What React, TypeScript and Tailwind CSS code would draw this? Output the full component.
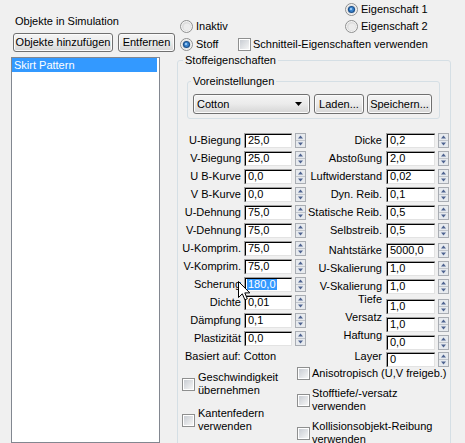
import React from 'react'

interface SpinItem {
  label: string
  value: string
  rowClass?: string
  labelClass?: string
  selected?: boolean
}

const LEFT_ROWS: SpinItem[] = [
  { label: 'U-Biegung', value: '25,0' },
  { label: 'V-Biegung', value: '25,0' },
  { label: 'U B-Kurve', value: '0,0' },
  { label: 'V B-Kurve', value: '0,0' },
  { label: 'U-Dehnung', value: '75,0' },
  { label: 'V-Dehnung', value: '75,0' },
  { label: 'U-Komprim.', value: '75,0' },
  { label: 'V-Komprim.', value: '75,0' },
  { label: 'Scherung', value: '180,0', selected: true },
  { label: 'Dichte', value: '0,01' },
  { label: 'Dämpfung', value: '0,1' },
  { label: 'Plastizität', value: '0,0' },
]

const RIGHT_ROWS: SpinItem[] = [
  { label: 'Dicke', value: '0,2' },
  { label: 'Abstoßung', value: '2,0' },
  { label: 'Luftwiderstand', value: '0,02' },
  { label: 'Dyn. Reib.', value: '0,1' },
  { label: 'Statische Reib.', value: '0,5' },
  { label: 'Selbstreib.', value: '0,5' },
  { label: 'Nahtstärke', value: '5000,0', rowClass: 'mt-[2px]' },
  { label: 'U-Skalierung', value: '1,0' },
  { label: 'V-Skalierung', value: '1,0' },
  { label: 'Tiefe', value: '1,0', rowClass: 'mt-[2px]', labelClass: 'mb-[14px]' },
  { label: 'Versatz', value: '1,0', labelClass: 'mb-[14px]' },
  { label: 'Haftung', value: '0,0', labelClass: 'mb-[14px]' },
  { label: 'Layer', value: '0', rowClass: '-mt-[1px]', labelClass: 'mb-[6px]' },
]

function Radio({ checked = false }: { checked?: boolean }) {
  return (
    <svg width="13" height="13" viewBox="0 0 13 13" className="shrink-0">
      <circle cx="6.5" cy="6.5" r="6" fill="#f3f3f3" stroke="#8e8f8f" />
      <circle cx="6.5" cy="6.5" r="4.5" fill="#dcdcdc" />
      <circle cx="7" cy="7" r="3.5" fill="#ececec" />
      {checked && (
        <>
          <circle cx="6.5" cy="6.5" r="3.6" fill="#1b4f8a" />
          <circle cx="6.5" cy="6.5" r="2.4" fill="#3c86d0" />
          <circle cx="6" cy="6" r="1.1" fill="#a9d4fa" />
        </>
      )}
    </svg>
  )
}

function Check() {
  return (
    <div className="h-[13px] w-[13px] shrink-0 border border-[#8e8f8f] bg-white p-[1px]">
      <div className="h-full w-full bg-linear-to-br from-[#c9cdd3] to-[#f6f6f6]" />
    </div>
  )
}

function Spinner() {
  return (
    <svg width="11" height="15" viewBox="0 0 11 15" className="shrink-0">
      <rect x="0.5" y="0.5" width="10" height="14" fill="#e7eaee" stroke="#a9adb3" />
      <line x1="1" y1="7.5" x2="10" y2="7.5" stroke="#c2c6cc" />
      <path d="M3 5.5 L5.5 2.5 L8 5.5 Z" fill="#4e6390" />
      <path d="M3 9.5 L5.5 12.5 L8 9.5 Z" fill="#4e6390" />
    </svg>
  )
}

function Field({ value, width, selected }: { value: string; width: string; selected?: boolean }) {
  return (
    <div className={`${width} h-[15px] shrink-0 border-t border-l border-[#a0a0a0] border-r-white border-b-white`}>
      <div className="flex h-full items-center border-t border-l border-black border-r border-b border-r-[#e3e3e3] border-b-[#e3e3e3] bg-white pl-[1px] leading-[11px]">
        {selected ? <span className="bg-[#3399ff] px-[1px] text-white">{value}</span> : <span className="px-[1px]">{value}</span>}
      </div>
    </div>
  )
}

function SpinRow({ item, labelW, fieldW, fieldGap }: { item: SpinItem; labelW: string; fieldW: string; fieldGap: string }) {
  return (
    <div className={`flex h-[18px] items-center ${item.rowClass ?? ''}`}>
      <div className={`${labelW} shrink-0 text-right leading-[13px] whitespace-nowrap ${item.labelClass ?? ''}`}>{item.label}</div>
      <div className={fieldGap}>
        <Field value={item.value} width={fieldW} selected={item.selected} />
      </div>
      <div className="ml-[3px]">
        <Spinner />
      </div>
    </div>
  )
}

function WinButton({ children, className }: { children: React.ReactNode; className: string }) {
  return (
    <button
      className={`${className} shrink-0 rounded-[3px] border border-[#707070] bg-linear-to-b from-[#f4f4f4] via-[#ebebeb] to-[#d5d5d5] text-[11px] leading-none text-black shadow-[inset_0_0_0_1px_#fbfbfb]`}
    >
      {children}
    </button>
  )
}

function Cursor() {
  return (
    <svg width="13" height="21" viewBox="0 0 13 21" className="absolute left-[238px] top-[281px]">
      <path
        d="M0.5 0.5 L0.5 16.5 L4.3 12.8 L6.9 18.8 L9.3 17.8 L6.8 11.9 L11.8 11.9 Z"
        fill="white"
        stroke="black"
        strokeWidth="1"
        strokeLinejoin="miter"
      />
    </svg>
  )
}

function CheckItem({ lines, gap }: { lines: string[]; gap: string }) {
  return (
    <div className={`flex items-center ${gap}`}>
      <Check />
      <div className="leading-[13px] whitespace-nowrap">
        {lines.map((l) => (
          <div key={l}>{l}</div>
        ))}
      </div>
    </div>
  )
}

export default function App() {
  return (
    <div className="relative flex h-[443px] w-[465px] overflow-hidden bg-[#f0f0f0] font-['Liberation_Sans',Arial,sans-serif] text-[11px] text-black">
      {/* left: objects list */}
      <div className="flex w-[176px] shrink-0 flex-col pt-[14px] pl-[11px]">
        <div className="pl-[4px] leading-[14px]">Objekte in Simulation</div>
        <div className="mt-[5px] flex gap-[5px] pl-[2px]">
          <WinButton className="h-[19px] w-[100px]">Objekte hinzufügen</WinButton>
          <WinButton className="h-[19px] w-[57px]">Entfernen</WinButton>
        </div>
        <div className="mt-[5px] w-[149px] flex-1 border border-[#828790] bg-white">
          <div className="w-[145px] bg-[#3399ff] pl-[2px] leading-[14px] text-white">Skirt Pattern</div>
        </div>
      </div>

      {/* right: cloth settings */}
      <div className="flex flex-1 flex-col">
        <div className="grid grid-cols-[62px_107px_1fr] grid-rows-[18px_17px_18px]">
          <div className="col-start-3 row-start-1 flex items-center gap-[3px]">
            <Radio checked />
            <span>Eigenschaft 1</span>
          </div>
          <div className="col-start-1 row-start-2 flex items-center gap-[3px] pl-[4px]">
            <Radio />
            <span>Inaktiv</span>
          </div>
          <div className="col-start-3 row-start-2 flex items-center gap-[3px]">
            <Radio />
            <span>Eigenschaft 2</span>
          </div>
          <div className="col-start-1 row-start-3 flex items-center gap-[3px] pl-[4px]">
            <Radio checked />
            <span>Stoff</span>
          </div>
          <div className="col-span-2 col-start-2 row-start-3 flex items-center gap-[2px] whitespace-nowrap">
            <Check />
            <span>Schnitteil-Eigenschaften verwenden</span>
          </div>
        </div>

        <fieldset className="ml-[1px] h-[420px] w-[274px] shrink-0 rounded-[3px] border border-[#d5dfe5]">
          <legend className="ml-[5px] px-[2px] leading-[14px]">Stoffeigenschaften</legend>

          <fieldset className="mt-[7px] ml-[9px] w-[253px] rounded-[3px] border border-[#d5dfe5] pb-[4px]">
            <legend className="ml-[3px] px-[2px] leading-[14px]">Voreinstellungen</legend>
            <div className="mt-[6px] flex pl-[5px]">
              <WinButton className="flex h-[20px] w-[117px] items-center justify-between pr-[7px] pl-[3px]">
                <span>Cotton</span>
                <svg width="7" height="4" viewBox="0 0 7 4">
                  <path d="M0 0 L7 0 L3.5 4 Z" fill="black" />
                </svg>
              </WinButton>
              <WinButton className="ml-[4px] h-[20px] w-[50px]">Laden...</WinButton>
              <WinButton className="ml-[3px] h-[20px] w-[65px]">Speichern...</WinButton>
            </div>
          </fieldset>

          <div className="mt-[12px] flex">
            <div className="flex w-[128px] shrink-0 flex-col">
              {LEFT_ROWS.map((r) => (
                <SpinRow key={r.label} item={r} labelW="w-[63px]" fieldW="w-[48px]" fieldGap="ml-[3px]" />
              ))}
              <div className="flex h-[18px] items-center pl-[7px]">Basiert auf: Cotton</div>
            </div>
            <div className="flex w-[143px] shrink-0 flex-col">
              {RIGHT_ROWS.map((r) => (
                <SpinRow key={r.label} item={r} labelW="w-[76px]" fieldW="w-[49px]" fieldGap="ml-[4px]" />
              ))}
            </div>
          </div>

          <div className="-mt-[1px] flex">
            <div className="flex w-[115px] shrink-0 flex-col gap-[10px] pt-[4px] pl-[4px]">
              <CheckItem lines={['Geschwindigkeit', 'übernehmen']} gap="gap-[3px]" />
              <CheckItem lines={['Kantenfedern', 'verwenden']} gap="gap-[3px]" />
            </div>
            <div className="flex flex-col gap-[7px] pl-[4px]">
              <CheckItem lines={['Anisotropisch (U,V freigeb.)']} gap="gap-[2px]" />
              <CheckItem lines={['Stofftiefe/-versatz', 'verwenden']} gap="gap-[2px]" />
              <CheckItem lines={['Kollisionsobjekt-Reibung', 'verwenden']} gap="gap-[2px]" />
            </div>
          </div>
        </fieldset>
      </div>

      <Cursor />
    </div>
  )
}
